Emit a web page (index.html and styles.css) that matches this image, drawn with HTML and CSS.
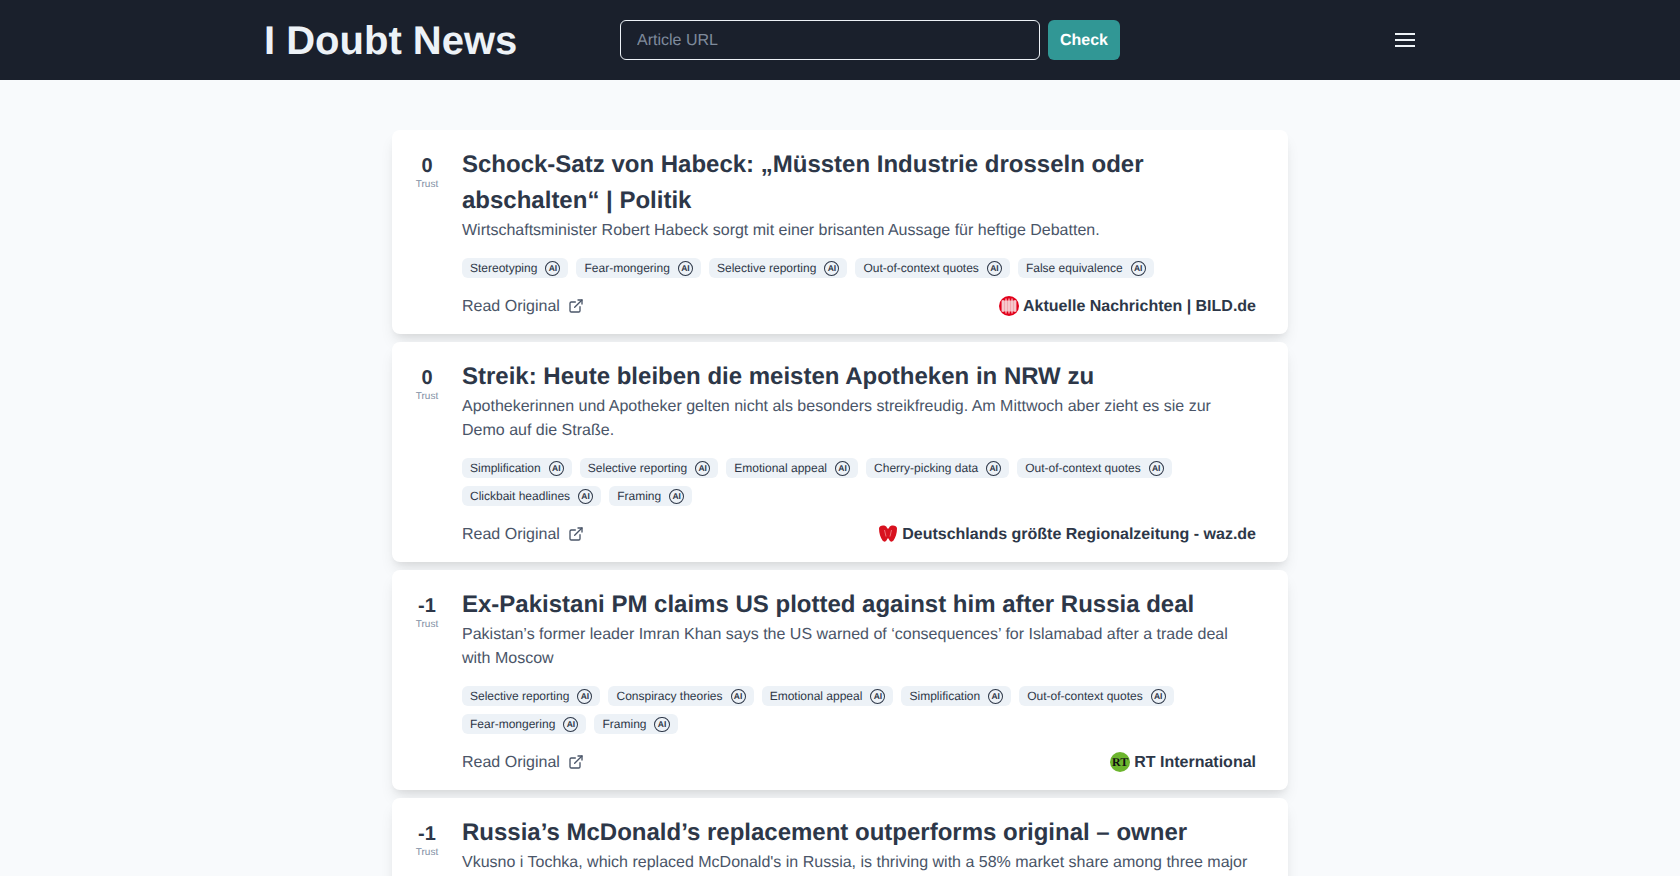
FILE: index.html
```html
<!DOCTYPE html>
<html lang="en">
<head>
    <meta charset="UTF-8" />
    <title>I Doubt News</title>
    <link rel="stylesheet" href="styles.css">
</head>
<body>
    <header class="topbar">
        <div class="topbar-inner">
            <h1 class="brand">I Doubt News</h1>
            <form class="check-form">
                <input class="url-input" type="text" placeholder="Article URL">
                <button class="check-btn" type="button">Check</button>
            </form>
            <button class="menu-btn" type="button" aria-label="Menu">
                <span></span><span></span><span></span>
            </button>
        </div>
    </header>

    <main class="feed">
        <article class="card">
            <div class="score"><strong>0</strong><span>Trust</span></div>
            <div class="card-body">
                <h2>Schock-Satz von Habeck: „Müssten Industrie drosseln oder abschalten“ | Politik</h2>
                <p>Wirtschaftsminister Robert Habeck sorgt mit einer brisanten Aussage für heftige Debatten.</p>
                <ul class="tags">
                    <li>Stereotyping <i class="ai">AI</i></li>
                    <li>Fear-mongering <i class="ai">AI</i></li>
                    <li>Selective reporting <i class="ai">AI</i></li>
                    <li>Out-of-context quotes <i class="ai">AI</i></li>
                    <li>False equivalence <i class="ai">AI</i></li>
                </ul>
                <div class="card-foot">
                    <a class="read" href="#">Read Original
                        <svg viewBox="0 0 24 24"><path d="M18 13v6a2 2 0 0 1-2 2H5a2 2 0 0 1-2-2V8a2 2 0 0 1 2-2h6"/><path d="M15 3h6v6"/><path d="M10 14 21 3"/></svg>
                    </a>
                    <div class="source">
                        <svg class="logo" viewBox="0 0 20 20">
                            <circle cx="10" cy="10" r="10" fill="#e2001a"/>
                            <path d="M2.500 4.500h15v11h-15z" fill="#f1a9b0"/>
                            <path d="M4 4v12M7 2.500v15M10 2.500v15M13 2.500v15M16 4v12" stroke="#fbe6e8" stroke-width="1"/>
                        </svg>
                        Aktuelle Nachrichten | BILD.de
                    </div>
                </div>
            </div>
        </article>

        <article class="card">
            <div class="score"><strong>0</strong><span>Trust</span></div>
            <div class="card-body">
                <h2>Streik: Heute bleiben die meisten Apotheken in NRW zu</h2>
                <p>Apothekerinnen und Apotheker gelten nicht als besonders streikfreudig. Am Mittwoch aber zieht es sie zur Demo auf die Straße.</p>
                <ul class="tags">
                    <li>Simplification <i class="ai">AI</i></li>
                    <li>Selective reporting <i class="ai">AI</i></li>
                    <li>Emotional appeal <i class="ai">AI</i></li>
                    <li>Cherry-picking data <i class="ai">AI</i></li>
                    <li>Out-of-context quotes <i class="ai">AI</i></li>
                    <li>Clickbait headlines <i class="ai">AI</i></li>
                    <li>Framing <i class="ai">AI</i></li>
                </ul>
                <div class="card-foot">
                    <a class="read" href="#">Read Original
                        <svg viewBox="0 0 24 24"><path d="M18 13v6a2 2 0 0 1-2 2H5a2 2 0 0 1-2-2V8a2 2 0 0 1 2-2h6"/><path d="M15 3h6v6"/><path d="M10 14 21 3"/></svg>
                    </a>
                    <div class="source">
                        <svg class="logo" viewBox="0 0 20 20">
                            <path d="M1 4.500C1 2.500 3 1.500 5 1.500c1.800 0 3.200.6 3.800 2L10 5l1.200-1.500c.6-1.400 2-2 3.800-2 2 0 4 1 4 3 0 4.800-1.500 9.200-3.500 12-1.300 1.600-3.200 1.500-4-.3L10 14l-1.500 2.200c-.8 1.800-2.700 1.900-4 .3C2.500 13.700 1 9.300 1 4.500z" fill="#d8121f"/>
                            <path d="M6.500 6l1.500 6.500M13.500 6L12 12.500" stroke="#f08a90" stroke-width=".8"/>
                        </svg>
                        Deutschlands größte Regionalzeitung - waz.de
                    </div>
                </div>
            </div>
        </article>

        <article class="card">
            <div class="score"><strong>-1</strong><span>Trust</span></div>
            <div class="card-body">
                <h2>Ex-Pakistani PM claims US plotted against him after Russia deal</h2>
                <p>Pakistan’s former leader Imran Khan says the US warned of ‘consequences’ for Islamabad after a trade deal with Moscow</p>
                <ul class="tags">
                    <li>Selective reporting <i class="ai">AI</i></li>
                    <li>Conspiracy theories <i class="ai">AI</i></li>
                    <li>Emotional appeal <i class="ai">AI</i></li>
                    <li>Simplification <i class="ai">AI</i></li>
                    <li>Out-of-context quotes <i class="ai">AI</i></li>
                    <li>Fear-mongering <i class="ai">AI</i></li>
                    <li>Framing <i class="ai">AI</i></li>
                </ul>
                <div class="card-foot">
                    <a class="read" href="#">Read Original
                        <svg viewBox="0 0 24 24"><path d="M18 13v6a2 2 0 0 1-2 2H5a2 2 0 0 1-2-2V8a2 2 0 0 1 2-2h6"/><path d="M15 3h6v6"/><path d="M10 14 21 3"/></svg>
                    </a>
                    <div class="source">
                        <span class="logo logo-rt">RT</span>
                        RT International
                    </div>
                </div>
            </div>
        </article>

        <article class="card">
            <div class="score"><strong>-1</strong><span>Trust</span></div>
            <div class="card-body">
                <h2>Russia’s McDonald’s replacement outperforms original – owner</h2>
                <p>Vkusno i Tochka, which replaced McDonald's in Russia, is thriving with a 58% market share among three major</p>
            </div>
        </article>
    </main>
</body>
</html>
```

FILE: styles.css
```css
html, body {
    height: 100%;
    overflow: hidden;
}

body {
    margin: 0;
    font-family: "Liberation Sans", Arial, sans-serif;
    font-size: 16px;
    line-height: 24px;
    text-rendering: geometricPrecision;
    background: #f8fafc;
    color: #2d3748;
}

.topbar {
    background: #1a202c;
    height: 80px;
}

.topbar-inner {
    width: 1152px;
    height: 100%;
    margin: 0 auto;
    display: flex;
    align-items: center;
}

.brand {
    width: 356px;
    margin: 0;
    padding-top: 2px;
    font-size: 40px;
    line-height: 48px;
    font-weight: 700;
    color: #edf2f7;
}

.check-form {
    display: flex;
    gap: 8px;
}

.url-input {
    width: 420px;
    height: 40px;
    box-sizing: border-box;
    padding: 2px 16px 0;
    font: inherit;
    text-rendering: geometricPrecision;
    color: #fff;
    background: #1a202c;
    border: 1px solid #edf2f7;
    border-radius: 6px;
}

.url-input::placeholder {
    color: #a0aec0;
    opacity: 0.75;
}

.check-btn {
    width: 72px;
    height: 40px;
    padding: 2px 0 0;
    font: inherit;
    font-weight: 700;
    text-rendering: geometricPrecision;
    color: #fff;
    background: #319795;
    border: none;
    border-radius: 6px;
}

.menu-btn {
    margin-left: auto;
    width: 20px;
    height: 14px;
    padding: 0;
    margin-right: 1px;
    display: flex;
    flex-direction: column;
    justify-content: space-between;
    background: none;
    border: none;
}

.menu-btn span {
    display: block;
    height: 2px;
    background: #edf2f7;
}

.feed {
    width: 896px;
    margin: 50px auto 0;
    display: flex;
    flex-direction: column;
    gap: 8px;
}

.card {
    display: flex;
    padding: 17px 32px 15px 16px;
    background: #fff;
    border-radius: 8px;
    box-shadow: 0 10px 15px -3px rgba(0, 0, 0, 0.1), 0 4px 6px -2px rgba(0, 0, 0, 0.05);
}

.score {
    flex: none;
    width: 38px;
    margin-right: 16px;
    padding-top: 7px;
    display: flex;
    flex-direction: column;
    align-items: center;
    text-align: center;
}

.score strong {
    font-size: 20px;
    line-height: 24px;
    margin-bottom: 1px;
    color: #2d3748;
}

.score span {
    font-size: 10px;
    line-height: 12px;
    color: #808ea3;
}

.card-body {
    flex: 1;
    min-width: 0;
}

.card-body h2 {
    margin: 0;
    font-size: 24px;
    line-height: 36px;
    font-weight: 700;
    color: #2d3748;
}

.card-body p {
    margin: 0 0 15px;
    color: #4a5568;
}

.tags {
    list-style: none;
    margin: 0 0 17px;
    padding: 0;
    display: flex;
    flex-wrap: wrap;
    gap: 8px;
}

.tags li {
    display: flex;
    align-items: center;
    gap: 8px;
    height: 20px;
    padding: 0 8px;
    font-size: 12px;
    color: #2d3748;
    background: #edf2f7;
    border-radius: 6px;
}

.ai {
    width: 15.1px;
    height: 15px;
    box-sizing: border-box;
    display: flex;
    align-items: center;
    justify-content: center;
    font-style: normal;
    font-size: 8.5px;
    font-weight: 700;
    line-height: 1;
    color: #2d3748;
    border: 1.4px solid #2d3748;
    border-radius: 50%;
}

.card-foot {
    display: flex;
    align-items: center;
    justify-content: space-between;
}

.read {
    display: flex;
    align-items: center;
    gap: 8px;
    color: #4a5568;
    text-decoration: none;
}

.read svg {
    width: 16px;
    height: 16px;
    margin-bottom: 2px;
    fill: none;
    stroke: #4a5568;
    stroke-width: 2;
    stroke-linecap: round;
    stroke-linejoin: round;
}

.source {
    display: flex;
    align-items: center;
    gap: 4px;
    font-weight: 700;
    color: #2d3748;
}

.logo {
    width: 20px;
    height: 20px;
    margin-bottom: 2px;
}

.logo-rt {
    display: flex;
    align-items: center;
    justify-content: center;
    font-size: 12px;
    font-weight: 700;
    font-family: "Liberation Serif", serif;
    color: #111;
    background: #6cb52d;
    border-radius: 50%;
}
```
